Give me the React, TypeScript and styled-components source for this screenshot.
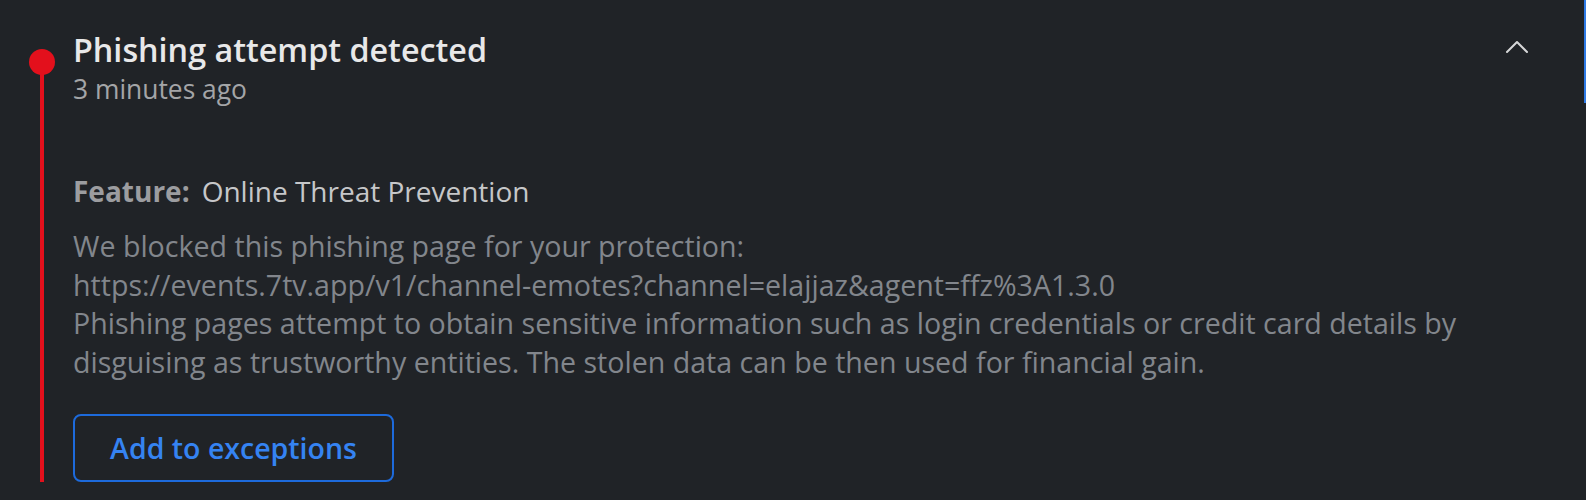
import React from "react";
import styled, { createGlobalStyle } from "styled-components";

const Global = createGlobalStyle`
  html, body { margin: 0; padding: 0; background: #202327; }
  body { font-family: "Open Sans", "Noto Sans", Arial, sans-serif; }
`;

const Page = styled.div`
  position: relative;
  width: 1586px;
  height: 500px;
  background: #202327;
  overflow: hidden;
`;

const ScrollEdge = styled.div`
  position: absolute;
  right: 0;
  top: 0;
  width: 2px;
  height: 103px;
  background: #2f7be6;
`;

const Item = styled.div`
  display: flex;
  padding: 0 56px 18px 29px;
  height: 500px;
  box-sizing: border-box;
`;

const Rail = styled.div`
  width: 26px;
  display: flex;
  flex-direction: column;
  align-items: center;
  padding-top: 49px;
`;

const Dot = styled.div`
  width: 26px;
  height: 26px;
  border-radius: 50%;
  background: #e3101c;
  flex-shrink: 0;
`;

const Line = styled.div`
  width: 4px;
  flex: 1;
  margin-top: -2px;
  background: #e3101c;
`;

const Body = styled.div`
  flex: 1;
  margin-left: 18px;
  display: flex;
  flex-direction: column;
  padding-top: 29px;
`;

const Header = styled.div`
  display: flex;
  align-items: flex-start;
  justify-content: space-between;
`;

const Title = styled.h1`
  margin: 0;
  font-size: 32.3px;
  line-height: 40px;
  font-weight: 600;
  color: #e8e8e9;
`;

const Time = styled.div`
  margin-top: 3px;
  font-size: 26.4px;
  line-height: 34px;
  color: #a4a5a7;
`;

const Toggle = styled.button`
  background: none;
  border: none;
  padding: 0;
  margin-top: 9px;
  width: 26px;
  height: 18px;
  display: flex;
  align-items: center;
  justify-content: center;
  cursor: pointer;
`;

const FeatureRow = styled.div`
  margin-top: 67px;
  font-size: 28px;
  line-height: 36px;
  color: #c6c7c9;
`;

const Label = styled.span`
  font-weight: 700;
  color: #9c9da0;
  margin-right: 12px;
`;

const Para = styled.p`
  margin: 18px 0 0;
  max-width: 1440px;
  font-size: 28.6px;
  line-height: 38.5px;
  color: #82868c;
`;

const Action = styled.button`
  margin-top: 33px;
  align-self: flex-start;
  width: 321px;
  height: 68px;
  border: 2px solid #1d6adb;
  border-radius: 8px;
  background: transparent;
  color: #3583f2;
  font-family: "Open Sans", "Noto Sans", Arial, sans-serif;
  font-size: 28.5px;
  font-weight: 600;
  cursor: pointer;
`;

export default function App() {
  return (
    <Page>
      <Global />
      <Item>
        <Rail>
          <Dot />
          <Line />
        </Rail>
        <Body>
          <Header>
            <div>
              <Title>Phishing attempt detected</Title>
              <Time>3 minutes ago</Time>
            </div>
            <Toggle aria-label="Collapse">
              <svg width="24" height="14" viewBox="0 0 24 14" fill="none">
                <path d="M2 12 L12 2 L22 12" stroke="#d6d7d8" strokeWidth="2" strokeLinecap="round" strokeLinejoin="round" />
              </svg>
            </Toggle>
          </Header>
          <FeatureRow>
            <Label>Feature:</Label>Online Threat Prevention
          </FeatureRow>
          <Para>
            We blocked this phishing page for your protection:
            <br />
            https://events.7tv.app/v1/channel-emotes?channel=elajjaz&amp;agent=ffz%3A1.3.0
            <br />
            Phishing pages attempt to obtain sensitive information such as login credentials or credit card details by disguising as trustworthy entities. The stolen data can be then used for financial gain.
          </Para>
          <Action>Add to exceptions</Action>
        </Body>
      </Item>
      <ScrollEdge />
    </Page>
  );
}
